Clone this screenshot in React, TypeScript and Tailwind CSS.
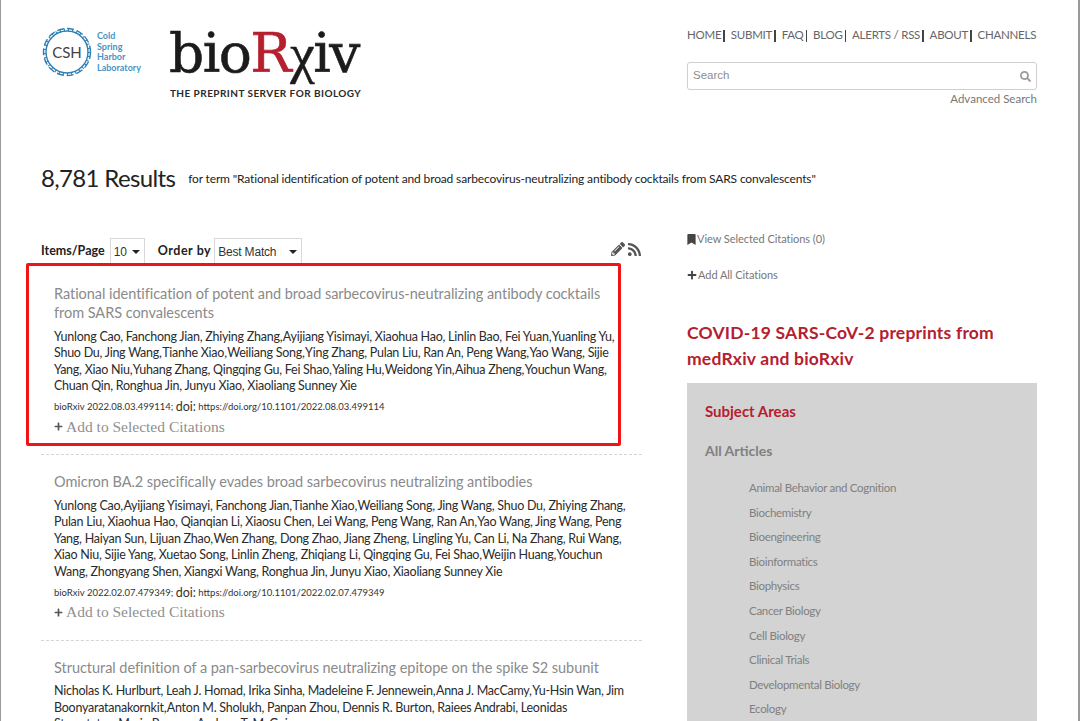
import { FaBookmark, FaPencilAlt, FaPlus, FaRss, FaSearch } from 'react-icons/fa';

interface Result {
  title: string[];
  authors: string[];
  id?: string;
  doi?: string;
}

const results: Result[] = [
  {
    title: [
      'Rational identification of potent and broad sarbecovirus-neutralizing antibody cocktails',
      'from SARS convalescents',
    ],
    authors: [
      'Yunlong Cao, Fanchong Jian, Zhiying Zhang, Ayijiang Yisimayi, Xiaohua Hao, Linlin Bao, Fei Yuan, Yuanling Yu,',
      'Shuo Du, Jing Wang, Tianhe Xiao, Weiliang Song, Ying Zhang, Pulan Liu, Ran An, Peng Wang, Yao Wang, Sijie',
      'Yang, Xiao Niu, Yuhang Zhang, Qingqing Gu, Fei Shao, Yaling Hu, Weidong Yin, Aihua Zheng, Youchun Wang,',
      'Chuan Qin, Ronghua Jin, Junyu Xiao, Xiaoliang Sunney Xie',
    ],
    id: '2022.08.03.499114',
    doi: '2022.08.03.499114',
  },
  {
    title: ['Omicron BA.2 specifically evades broad sarbecovirus neutralizing antibodies'],
    authors: [
      'Yunlong Cao, Ayijiang Yisimayi, Fanchong Jian, Tianhe Xiao, Weiliang Song, Jing Wang, Shuo Du, Zhiying Zhang,',
      'Pulan Liu, Xiaohua Hao, Qianqian Li, Xiaosu Chen, Lei Wang, Peng Wang, Ran An, Yao Wang, Jing Wang, Peng',
      'Yang, Haiyan Sun, Lijuan Zhao, Wen Zhang, Dong Zhao, Jiang Zheng, Lingling Yu, Can Li, Na Zhang, Rui Wang,',
      'Xiao Niu, Sijie Yang, Xuetao Song, Linlin Zheng, Zhiqiang Li, Qingqing Gu, Fei Shao, Weijin Huang, Youchun',
      'Wang, Zhongyang Shen, Xiangxi Wang, Ronghua Jin, Junyu Xiao, Xiaoliang Sunney Xie',
    ],
    id: '2022.02.07.479349',
    doi: '2022.02.07.479349',
  },
  {
    title: ['Structural definition of a pan-sarbecovirus neutralizing epitope on the spike S2 subunit'],
    authors: [
      'Nicholas K. Hurlburt, Leah J. Homad, Irika Sinha, Madeleine F. Jennewein, Anna J. MacCamy, Yu-Hsin Wan, Jim',
      'Boonyaratanakornkit, Anton M. Sholukh, Panpan Zhou, Dennis R. Burton, Raiees Andrabi, Leonidas',
      'Stamatatos, Marie Pancera, Andrew T. McGuire',
    ],
  },
];

const navItems = ['HOME', 'SUBMIT', 'FAQ', 'BLOG', 'ALERTS / RSS', 'ABOUT', 'CHANNELS'];

const subjects = [
  'Animal Behavior and Cognition',
  'Biochemistry',
  'Bioengineering',
  'Bioinformatics',
  'Biophysics',
  'Cancer Biology',
  'Cell Biology',
  'Clinical Trials',
  'Developmental Biology',
  'Ecology',
];

// the reference font kerns the space away after a comma before these capitals
const tightenCommas = (line: string) => line.replace(/, (?=[AYWT])/g, ',\u200A');

function CshLogo() {
  return (
    <div className="flex items-center gap-[5px]">
      <div className="relative h-[50px] w-[50px]">
        <svg viewBox="0 0 50 50" className="h-[50px] w-[50px]" fill="none" stroke="#2f7fb5">
          <circle cx="25" cy="25" r="21" strokeWidth="1.4" />
          <circle cx="25" cy="25" r="23.5" strokeWidth="1.4" strokeDasharray="7 3" />
          <circle cx="25" cy="25" r="22.2" strokeWidth="3" strokeDasharray="1 3.2" />
        </svg>
        <span className="absolute inset-0 flex items-center justify-center font-['Lato',sans-serif] text-[15px] text-[#444]">
          CSH
        </span>
      </div>
      <div className="font-['Lato',sans-serif] text-[9px] font-bold leading-[10.5px] text-[#4a93c4]">
        <div>Cold</div>
        <div>Spring</div>
        <div>Harbor</div>
        <div>Laboratory</div>
      </div>
    </div>
  );
}

function BiorxivLogo() {
  return (
    <div className="flex flex-col items-start">
      <div className="h-[62px] whitespace-nowrap font-['DejaVu_Serif',serif] text-[55px] leading-[56px] tracking-[-1.5px] text-[#1c1a1b] [-webkit-text-stroke:0.6px]">
        bio<span className="text-[#b5202f]">R</span>
        <span className="font-['Liberation_Serif',serif]">χ</span>iv
      </div>
      <div className="ml-[1px] whitespace-nowrap font-['Lato',sans-serif] text-[10px] font-bold leading-[12px] tracking-[0.45px] text-[#2a2a2a]">
        THE PREPRINT SERVER FOR BIOLOGY
      </div>
    </div>
  );
}

function Select({ value, width }: { value: string; width: string }) {
  return (
    <div className={`${width} flex h-[27px] items-center justify-between border border-[#d8d8d8] pl-[3px] pr-[3px] font-['Liberation_Sans',sans-serif] text-[12px] tracking-[-0.2px] text-[#333]`}>
      <span>{value}</span>
      <span className="mr-[1px] h-0 w-0 border-x-[4px] border-t-[4px] border-x-transparent border-t-[#222]" />
    </div>
  );
}

function ResultItem({ result, boxed }: { result: Result; boxed: boolean }) {
  return (
    <div className="relative border-b border-dashed border-[#d5d5d5] pb-[16.5px] pl-[13px]">
      {boxed && (
        <div className="absolute left-[-15px] top-[-21px] h-[183px] w-[595px] rounded-[2px] border-[3px] border-[#f01414]" />
      )}
      <div className="font-['Lato',sans-serif] text-[14.5px] leading-[19px] tracking-[-0.04px] text-[#8a8a8a]">
        {result.title.map((line) => (
          <div key={line} className="whitespace-nowrap">{line}</div>
        ))}
      </div>
      <div className="mt-[6.5px] font-['Lato',sans-serif] text-[12.5px] leading-[16.5px] tracking-[-0.25px] text-[#2b2b2b]">
        {result.authors.map((line) => (
          <div key={line} className="whitespace-nowrap">{tightenCommas(line)}</div>
        ))}
      </div>
      {result.id && (
        <>
          <div className="mt-[5px] flex h-[16px] items-center whitespace-nowrap font-['Lato',sans-serif] text-[9.5px] text-[#333]">
            bioRxiv {result.id};&nbsp;<span className="text-[12.5px]">doi:</span>&nbsp;https://doi.org/10.1101/{result.doi}
          </div>
          <div className="flex h-[22px] items-center gap-[3px] font-['Liberation_Serif',serif] text-[15.5px] text-[#8f8f8f]">
            <FaPlus className="h-[9px] w-[9px] text-[#555]" />
            Add to Selected Citations
          </div>
        </>
      )}
    </div>
  );
}

export default function App() {
  return (
    <div className="h-[721px] w-[1080px] overflow-hidden border-l border-r-2 border-x-[#9a9a9a] bg-white font-['Lato',sans-serif]">
      <div className="flex h-[148px] pl-[41px] pr-[41px] pt-[26px]">
        <div className="mt-[1px]">
          <CshLogo />
        </div>
        <div className="ml-[28px] mt-[-1px]">
          <BiorxivLogo />
        </div>
        <div className="ml-auto w-[350px]">
          <nav className="flex h-[18px] items-center whitespace-nowrap text-[11.5px] tracking-[-0.25px] text-[#666]">
            {navItems.map((item, i) => (
              <span key={item} className="flex items-center">
                {item}
                {i < navItems.length - 1 && (
                  <span className="ml-[2px] mr-[6px] mt-[2px] h-[12px] w-[1.5px] bg-[#444]" />
                )}
              </span>
            ))}
          </nav>
          <div className="mt-[18px] flex h-[28px] items-center justify-between rounded-[3px] border border-[#cfcfcf] px-[5px]">
            <span className="font-['Liberation_Sans',sans-serif] text-[11.5px] text-[#8d8d8d]">Search</span>
            <FaSearch className="h-[11px] w-[11px] text-[#999]" />
          </div>
          <div className="text-right text-[11.5px] text-[#777]">Advanced Search</div>
        </div>
      </div>

      <div className="flex h-[60px] items-center pl-[40px]">
        <span className="whitespace-nowrap text-[24px] tracking-[-0.65px] text-[#222]">8,781 Results</span>
        <span className="ml-[13px] mt-[2px] whitespace-nowrap text-[12px] tracking-[-0.15px] text-[#222]">
          for term "Rational identification of potent and broad sarbecovirus-neutralizing antibody cocktails from SARS convalescents"
        </span>
      </div>

      <div className="flex pl-[40px] pr-[41px] pt-[22px]">
        <div className="w-[601px]">
          <div className="mt-[8px] flex h-[27px] items-center">
            <span className="mr-[5px] whitespace-nowrap text-[12.5px] font-bold text-[#222]">Items/Page</span>
            <Select value="10" width="w-[35px]" />
            <span className="ml-[13px] mr-[3px] whitespace-nowrap text-[12.5px] font-bold tracking-[0.55px] text-[#222]">Order by</span>
            <Select value="Best Match" width="w-[88px]" />
            <div className="ml-auto flex items-center gap-[2px] pb-[5px] text-[#555]">
              <FaPencilAlt className="h-[14px] w-[14px]" />
              <FaRss className="h-[15px] w-[15px]" />
            </div>
          </div>
          <div className="mt-[19px]">
            <ResultItem result={results[0]} boxed />
          </div>
          <div className="mt-[17px]">
            <ResultItem result={results[1]} boxed={false} />
          </div>
          <div className="mt-[17px]">
            <ResultItem result={results[2]} boxed={false} />
          </div>
        </div>

        <div className="ml-[45px] w-[350px]">
          <div className="flex h-[18px] items-center gap-[1px] text-[11px] tracking-[-0.05px] text-[#777]">
            <FaBookmark className="h-[11px] w-[9px] text-[#444]" />
            View Selected Citations (0)
          </div>
          <div className="mt-[18px] flex h-[18px] items-center gap-[1px] text-[11px] tracking-[-0.05px] text-[#777]">
            <FaPlus className="h-[10px] w-[10px] text-[#444]" />
            Add All Citations
          </div>
          <div className="mt-[36px] whitespace-nowrap text-[17.5px] font-bold leading-[26px] tracking-[0.2px] text-[#b5202f]">
            COVID-19 SARS-CoV-2 preprints from
            <br />
            medRxiv and bioRxiv
          </div>
          <div className="mt-[11px] h-[400px] bg-[#d3d3d3] pl-[18px] pt-[19px]">
            <div className="text-[15px] font-bold leading-[18px] text-[#b5202f]">Subject Areas</div>
            <div className="mt-[22px] text-[14px] font-bold leading-[18px] text-[#808080]">All Articles</div>
            <div className="mt-[16px] pl-[44px]">
              {subjects.map((subject) => (
                <div key={subject} className="h-[24.6px] text-[11.5px] leading-[24.6px] tracking-[-0.3px] text-[#808080]">
                  {subject}
                </div>
              ))}
            </div>
          </div>
        </div>
      </div>
    </div>
  );
}
